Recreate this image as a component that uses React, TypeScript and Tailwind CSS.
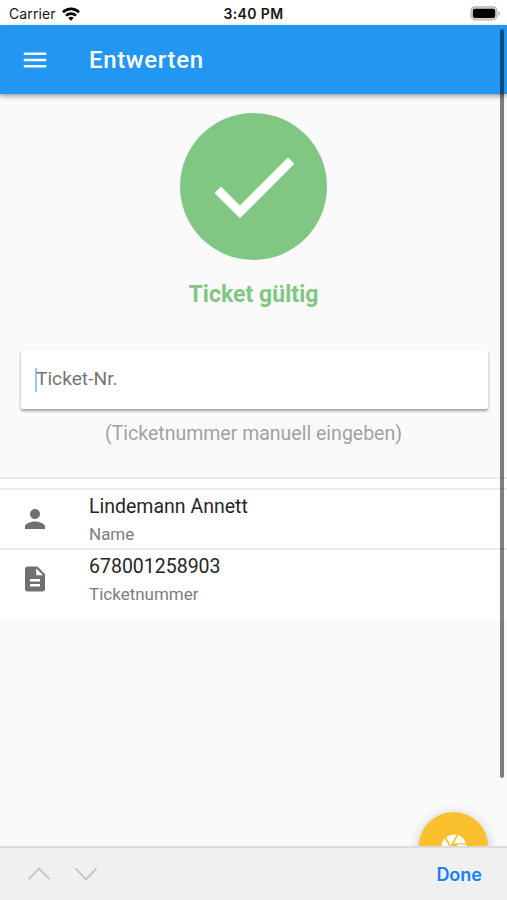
import type { ReactNode } from "react";
import { MdMenu, MdCheck, MdPerson, MdDescription, MdCamera } from "react-icons/md";

function StatusBar() {
  return (
    <div className="flex h-[25px] shrink-0 items-center justify-between bg-white pt-[2px] pl-[9px] pr-[6px] font-['Inter',sans-serif] text-[#161616]">
      <div className="flex w-[160px] items-center gap-[6px]">
        <span className="text-[14px] leading-none tracking-[0.1px]">Carrier</span>
        <svg width="18" height="14" viewBox="0 0 18 14" fill="none" stroke="#000" strokeWidth="2.7">
          <path d="M1 5.2a11.5 11.5 0 0 1 16 0" />
          <path d="M4 8.6a7.2 7.2 0 0 1 10 0" />
          <path d="M6.3 11a3.8 3.8 0 0 1 5.4 0L9 13.8z" fill="#000" stroke="none" />
        </svg>
      </div>
      <span className="-ml-[3px] text-[14px] font-semibold leading-none tracking-[0.4px]">3:40 PM</span>
      <div className="flex w-[160px] justify-end">
        <svg width="31" height="15" viewBox="0 0 31 15">
          <rect x="1" y="0.8" width="26" height="13" rx="4" fill="#d6d6d6" stroke="#b5b5b5" strokeWidth="1.2" />
          <rect x="2.9" y="2.7" width="22.3" height="9.2" rx="2" fill="#000" />
          <path d="M28.4 5.2q1.8.7 1.8 2.2t-1.8 2.2z" fill="#b5b5b5" />
        </svg>
      </div>
    </div>
  );
}

function Row({ icon, title, label }: { icon: ReactNode; title: string; label: string }) {
  return (
    <div className="flex h-[60px] items-center border-t-2 border-[#ebebeb] pl-5 text-[#707070]">
      {icon}
      <div className="ml-[39px] flex flex-col">
        <span className="mt-px text-[19.5px] leading-[28px] text-[#262626]">{title}</span>
        <span className="text-[17px] leading-[26px] text-[#7d7d7d]">{label}</span>
      </div>
    </div>
  );
}

export default function App() {
  return (
    <div className="relative flex h-[900px] w-[507px] flex-col overflow-hidden bg-[#fafafa] font-['Roboto',sans-serif]">
      <StatusBar />
      <header className="relative flex h-[69px] shrink-0 items-center bg-[#2196f3] pl-5 text-white shadow-[0_2px_5px_rgba(0,0,0,0.4)]">
        <MdMenu size={30} />
        <h1 className="ml-[39px] text-[24px] font-medium tracking-[0.65px]">Entwerten</h1>
      </header>

      <main className="flex flex-1 flex-col">
        <div className="mt-[19px] flex size-[147px] items-center justify-center self-center rounded-full bg-[#81c784] text-white">
          <MdCheck size={109} />
        </div>
        <p className="mt-[20px] text-center text-[23px] font-bold leading-[30px] tracking-[0.05px] text-[#81c784]">Ticket gültig</p>

        <div className="ml-[21px] mr-[19px] mt-[40px] flex h-[59px] shrink-0 items-center rounded-[2px] bg-white pl-[14px] shadow-[0_2px_3px_rgba(0,0,0,0.38)]">
          <span className="h-[24px] w-[2px] bg-[#90caf9]" />
          <span className="-ml-[1px] text-[19.2px] text-[#757575]">Ticket-Nr.</span>
        </div>
        <p className="mt-[11px] text-center text-[19.5px] leading-[28px] text-[#a2a2a2]">(Ticketnummer manuell eingeben)</p>

        <div className="mt-[29px] h-[143px] border-t-2 border-[#ebebeb] bg-white pt-[9px]">
          <Row icon={<MdPerson size={30} />} title="Lindemann Annett" label="Name" />
          <Row icon={<MdDescription size={30} />} title="678001258903" label="Ticketnummer" />
        </div>
      </main>

      <button className="absolute left-[419px] top-[812px] flex size-[69px] items-center justify-center rounded-full bg-[#fbc02d] text-white shadow-[0_3px_12px_rgba(0,0,0,0.25)]">
        <MdCamera size={30} />
      </button>
      <div className="absolute right-[3px] top-[29px] h-[749px] w-[4px] rounded-full bg-black/50" />

      <footer className="relative flex h-[54px] shrink-0 items-center border-t-2 border-[#dcdcdc] bg-[#f0f0f0] pl-[28px] pr-[25px] font-['Inter',sans-serif]">
        <svg width="70" height="14" viewBox="0 0 70 14" fill="none" stroke="#c3c3c3" strokeWidth="1.7">
          <path d="M.7 12.4 11 1.4l10.8 11M47.5 1.4l10.5 11 10.5-11" />
        </svg>
        <span className="ml-auto text-[18px] font-semibold text-[#167efb]">Done</span>
      </footer>
    </div>
  );
}
